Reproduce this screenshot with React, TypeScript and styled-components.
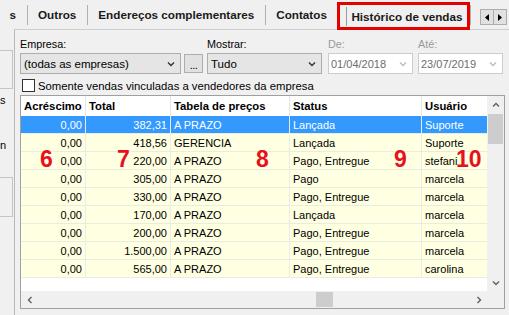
import React from 'react';
import styled, { createGlobalStyle } from 'styled-components';

const GlobalStyle = createGlobalStyle`
  html, body {
    margin: 0;
    padding: 0;
    background: #f0f0f0;
  }
  body {
    width: 509px;
    height: 315px;
    overflow: hidden;
    font-family: "Liberation Sans", Arial, sans-serif;
  }
  * { box-sizing: border-box; }
`;

const Window = styled.div`
  width: 509px;
  height: 315px;
  display: flex;
  flex-direction: column;
  overflow: hidden;
  background: #f0f0f0;
`;

const TabStrip = styled.div`
  height: 29px;
  flex-shrink: 0;
  display: flex;
  align-items: stretch;
  margin-left: -1px;
  position: relative;
  z-index: 2;
`;

const Tab = styled.div`
  display: flex;
  align-items: center;
  padding: 0 10.5px 1px;
  font-size: 11.7px;
  font-weight: bold;
  color: #1a1a1a;
  white-space: nowrap;
`;

const TabSep = styled.div`
  width: 1px;
  margin: 5px 0 4px;
  background: #b0b0b0;
`;

const ActiveTab = styled.div`
  align-self: flex-start;
  margin-top: 2px;
  height: 28px;
  border: 3px solid #e50000;
  display: flex;
  align-items: center;
  padding: 0 5px 0 6px;
  font-size: 11.7px;
  font-weight: bold;
  color: #1a1a1a;
  white-space: nowrap;
`;

const ActiveLabel = styled.span`
  border-left: 1px solid #9a9a9a;
  padding: 3px 0 3px 4px;
`;

const TabScroll = styled.div`
  display: flex;
  margin: 9px 0 0 9px;
  height: 16px;
`;

const TabScrollButton = styled.div`
  width: 14px;
  height: 16px;
  background: #e1e1e1;
  border: 1px solid #adadad;
  display: flex;
  align-items: center;
  justify-content: center;
  & + & { margin-left: -1px; }
`;

const Body = styled.div`
  flex: 1;
  display: flex;
  min-height: 0;
`;

const LeftStrip = styled.div`
  width: 14px;
  flex-shrink: 0;
  display: flex;
  flex-direction: column;
  padding-top: 21px;
  font-size: 11px;
  color: #000;
`;

const SideBox = styled.div<{ $h: number; $mt?: number }>`
  width: 13px;
  height: ${(p) => p.$h}px;
  margin-top: ${(p) => p.$mt ?? 0}px;
  border: 1px solid #c4c4c4;
  border-left: none;
  background: #f0f0f0;
`;

const SideText = styled.div<{ $gap: number }>`
  margin-top: ${(p) => p.$gap}px;
  height: 13px;
  line-height: 13px;
`;

const Panel = styled.div`
  flex: 1;
  border-left: 1px solid #b9b9b9;
  border-top: 1px solid #cfcfcf;
  padding: 7px 0 0 5px;
  display: flex;
  flex-direction: column;
  font-size: 10.8px;
`;

const FormRow = styled.div`
  display: flex;
  align-items: flex-end;
`;

const Field = styled.div<{ $w: number; $ml?: number }>`
  width: ${(p) => p.$w}px;
  margin-left: ${(p) => p.$ml ?? 0}px;
  display: flex;
  flex-direction: column;
  gap: 2px;
`;

const Label = styled.div<{ $disabled?: boolean }>`
  height: 14px;
  line-height: 14px;
  color: ${(p) => (p.$disabled ? '#9a9a9a' : '#000')};
`;

const Controls = styled.div`
  display: flex;
  align-items: center;
  gap: 3px;
`;

const Combo = styled.div<{ $disabled?: boolean }>`
  flex: 1;
  height: 21px;
  display: flex;
  align-items: center;
  justify-content: space-between;
  padding: 0 5px 0 ${(p) => (p.$disabled ? 2 : 3)}px;
  background: ${(p) => (p.$disabled ? '#ffffff' : '#e5e5e5')};
  border: 1px solid ${(p) => (p.$disabled ? '#cccccc' : '#adadad')};
  color: ${(p) => (p.$disabled ? '#6d6d6d' : '#000')};
  font-size: ${(p) => (p.$disabled ? 11 : 11.5)}px;
  white-space: nowrap;
`;

const DotsButton = styled.div`
  width: 19px;
  height: 19px;
  flex-shrink: 0;
  background: #e1e1e1;
  border: 1px solid #adadad;
  display: flex;
  align-items: flex-end;
  justify-content: center;
  font-size: 11px;
  line-height: 14px;
  letter-spacing: -0.5px;
`;

const CheckRow = styled.label`
  height: 21px;
  padding: 2px 0 0 2px;
  display: flex;
  align-items: center;
  gap: 3px;
  font-size: 11.3px;
`;

const CheckBox = styled.span`
  width: 13px;
  height: 13px;
  background: #fff;
  border: 1px solid #333;
`;

const GridBox = styled.div`
  position: relative;
  width: 485px;
  height: 214px;
  border: 1px solid #a0a0a0;
  display: grid;
  grid-template-columns: 1fr 17px;
  grid-template-rows: 1fr 17px;
  background: #fff;
`;

const TableArea = styled.div`
  overflow: hidden;
  background: #fff;
`;

const cols = '65px 85px 119px 132px 90px';

const HeaderRow = styled.div`
  display: grid;
  grid-template-columns: ${cols};
  height: 20px;
  width: 491px;
`;

const HeadCell = styled.div`
  display: flex;
  align-items: center;
  padding: 0 3px;
  border-right: 1px solid #e5e5e5;
  font-size: 11.3px;
  font-weight: bold;
  color: #000;
  white-space: nowrap;
  overflow: hidden;
`;

const Row = styled.div<{ $selected?: boolean }>`
  display: grid;
  grid-template-columns: ${cols};
  height: 18px;
  width: 491px;
  background: ${(p) => (p.$selected ? '#3399ff' : '#ffffe1')};
  color: ${(p) => (p.$selected ? '#fff' : '#000')};
`;

const Cell = styled.div<{ $right?: boolean }>`
  display: flex;
  align-items: center;
  justify-content: ${(p) => (p.$right ? 'flex-end' : 'flex-start')};
  padding: 0 ${(p) => (p.$right ? 3 : 2)}px 0 3px;
  border-right: 1px solid #ebebeb;
  border-bottom: 1px solid #ebebe0;
  font-size: 11px;
  white-space: nowrap;
  overflow: hidden;
`;

const VScroll = styled.div`
  background: #f0f0f0;
  display: flex;
  flex-direction: column;
  align-items: center;
`;

const HScroll = styled.div`
  background: #f0f0f0;
  display: flex;
  align-items: center;
`;

const ScrollBtn = styled.div`
  width: 17px;
  height: 17px;
  flex-shrink: 0;
  display: flex;
  align-items: center;
  justify-content: center;
`;

const VTrack = styled.div`
  flex: 1;
  width: 100%;
  padding: 1px 1px 0;
`;

const HTrack = styled.div<{ $offset: number }>`
  flex: 1;
  height: 100%;
  padding: 1px 0 1px ${(p) => p.$offset}px;
`;

const VThumb = styled.div`
  height: 30px;
  background: #cdcdcd;
`;

const HThumb = styled.div`
  width: 17px;
  height: 100%;
  background: #cdcdcd;
`;

const Corner = styled.div`
  background: #f0f0f0;
`;

const Marker = styled.span<{ $x: number; $y: number }>`
  position: absolute;
  left: ${(p) => p.$x}px;
  top: ${(p) => p.$y}px;
  font-size: 23px;
  line-height: 23px;
  font-weight: bold;
  color: #e8101c;
  pointer-events: none;
`;

type Dir = 'up' | 'down' | 'left' | 'right';

const Chevron = ({ dir, color = '#606060', size = 8 }: { dir: Dir; color?: string; size?: number }) => {
  const d = {
    up: 'M1 5.5 L4 2.5 L7 5.5',
    down: 'M1 2.5 L4 5.5 L7 2.5',
    left: 'M5.5 1 L2.5 4 L5.5 7',
    right: 'M2.5 1 L5.5 4 L2.5 7',
  }[dir];
  return (
    <svg width={size} height={size} viewBox="0 0 8 8">
      <path d={d} fill="none" stroke={color} strokeWidth="1.4" />
    </svg>
  );
};

const Triangle = ({ dir }: { dir: 'left' | 'right' }) => (
  <svg width="4" height="7" viewBox="0 0 4 7">
    <path d={dir === 'left' ? 'M4 0 L0 3.5 L4 7 Z' : 'M0 0 L4 3.5 L0 7 Z'} fill="#000" />
  </svg>
);

const rows = [
  ['0,00', '382,31', 'A PRAZO', 'Lançada', 'Suporte'],
  ['0,00', '418,56', 'GERENCIA', 'Lançada', 'Suporte'],
  ['0,00', '220,00', 'A PRAZO', 'Pago, Entregue', 'stefani'],
  ['0,00', '305,00', 'A PRAZO', 'Pago', 'marcela'],
  ['0,00', '330,00', 'A PRAZO', 'Pago, Entregue', 'marcela'],
  ['0,00', '170,00', 'A PRAZO', 'Lançada', 'marcela'],
  ['0,00', '200,00', 'A PRAZO', 'Pago, Entregue', 'marcela'],
  ['0,00', '1.500,00', 'A PRAZO', 'Pago, Entregue', 'marcela'],
  ['0,00', '565,00', 'A PRAZO', 'Pago, Entregue', 'carolina'],
];

const headers = ['Acréscimo', 'Total', 'Tabela de preços', 'Status', 'Usuário'];

// red annotation numbers painted over the grid
const markers = [
  { n: '6', x: 19, y: 52 },
  { n: '7', x: 96, y: 52 },
  { n: '8', x: 235, y: 52 },
  { n: '9', x: 373, y: 52 },
  { n: '10', x: 435, y: 52 },
];

function App(): JSX.Element {
  return (
    <Window>
      <GlobalStyle />
      <TabStrip>
        <Tab>s</Tab>
        <TabSep />
        <Tab>Outros</Tab>
        <TabSep />
        <Tab>Endereços complementares</Tab>
        <TabSep />
        <Tab>Contatos</Tab>
        <ActiveTab>
          <ActiveLabel>Histórico de vendas</ActiveLabel>
        </ActiveTab>
        <TabSep />
        <TabScroll>
          <TabScrollButton><Triangle dir="left" /></TabScrollButton>
          <TabScrollButton><Triangle dir="right" /></TabScrollButton>
        </TabScroll>
      </TabStrip>
      <Body>
        <LeftStrip>
          <SideBox $h={39} />
          <SideText $gap={5}>s</SideText>
          <SideText $gap={32}>n</SideText>
          <SideBox $h={40} $mt={25} />
        </LeftStrip>
        <Panel>
          <FormRow>
            <Field $w={183}>
              <Label>Empresa:</Label>
              <Controls>
                <Combo>
                  <span>(todas as empresas)</span>
                  <Chevron dir="down" color="#333" />
                </Combo>
                <DotsButton>...</DotsButton>
              </Controls>
            </Field>
            <Field $w={115} $ml={4}>
              <Label>Mostrar:</Label>
              <Controls>
                <Combo>
                  <span>Tudo</span>
                  <Chevron dir="down" color="#333" />
                </Combo>
              </Controls>
            </Field>
            <Field $w={85} $ml={6}>
              <Label $disabled>De:</Label>
              <Controls>
                <Combo $disabled>
                  <span>01/04/2018</span>
                  <Chevron dir="down" color="#bcbcbc" />
                </Combo>
              </Controls>
            </Field>
            <Field $w={85} $ml={5}>
              <Label $disabled>Até:</Label>
              <Controls>
                <Combo $disabled>
                  <span>23/07/2019</span>
                  <Chevron dir="down" color="#bcbcbc" />
                </Combo>
              </Controls>
            </Field>
          </FormRow>
          <CheckRow>
            <CheckBox />
            <span>Somente vendas vinculadas a vendedores da empresa</span>
          </CheckRow>
          <GridBox>
            <TableArea>
              <HeaderRow>
                {headers.map((h) => (
                  <HeadCell key={h}>{h}</HeadCell>
                ))}
              </HeaderRow>
              {rows.map((r, i) => (
                <Row key={i} $selected={i === 0}>
                  <Cell $right>{r[0]}</Cell>
                  <Cell $right>{r[1]}</Cell>
                  <Cell>{r[2]}</Cell>
                  <Cell>{r[3]}</Cell>
                  <Cell>{r[4]}</Cell>
                </Row>
              ))}
            </TableArea>
            <VScroll>
              <ScrollBtn><Chevron dir="up" /></ScrollBtn>
              <VTrack>
                <VThumb />
              </VTrack>
              <ScrollBtn><Chevron dir="down" /></ScrollBtn>
            </VScroll>
            <HScroll>
              <ScrollBtn><Chevron dir="left" /></ScrollBtn>
              <HTrack $offset={278}>
                <HThumb />
              </HTrack>
              <ScrollBtn><Chevron dir="right" /></ScrollBtn>
            </HScroll>
            <Corner />
            {markers.map((m) => (
              <Marker key={m.n} $x={m.x} $y={m.y}>{m.n}</Marker>
            ))}
          </GridBox>
        </Panel>
      </Body>
    </Window>
  );
}

export default App;
